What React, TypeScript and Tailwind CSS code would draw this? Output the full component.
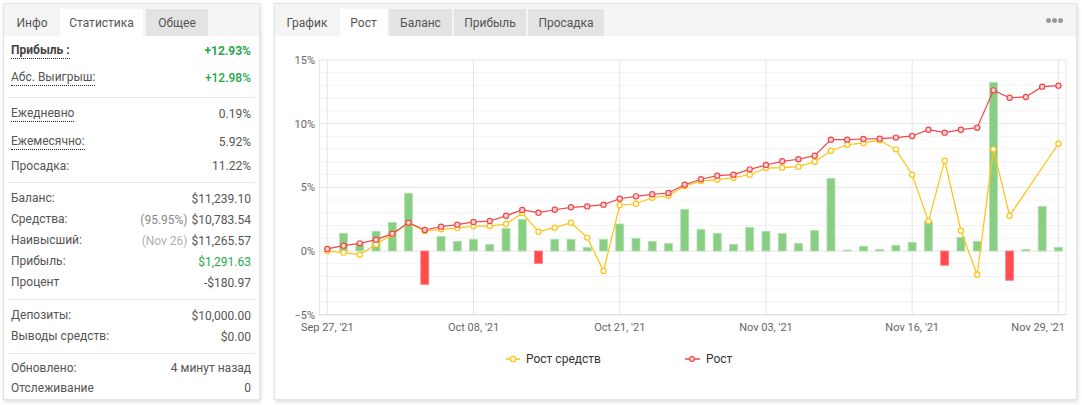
import React from "react";

type Row = {
  label: string;
  value: string;
  note?: string;
  noteColor?: string;
  dotted?: boolean;
  bold?: boolean;
  green?: boolean;
  medium?: boolean;
  h: string;
};

// группы строк статистики
const GROUPS: Row[][] = [
  [
    { label: "Прибыль :", value: "+12.93%", dotted: true, bold: true, green: true, h: "h-[27px]" },
    { label: "Абс. Выигрыш:", value: "+12.98%", dotted: true, green: true, medium: true, h: "h-[27px]" },
  ],
  [
    { label: "Ежедневно", value: "0.19%", dotted: true, h: "h-[28px]" },
    { label: "Ежемесячно:", value: "5.92%", dotted: true, h: "h-[28px]" },
    { label: "Просадка:", value: "11.22%", h: "h-[20px]" },
  ],
  [
    { label: "Баланс:", value: "$11,239.10", h: "h-[21px]" },
    { label: "Средства:", value: "$10,783.54", note: "(95.95%)", noteColor: "text-[#888]", h: "h-[21px]" },
    { label: "Наивысший:", value: "$11,265.57", note: "(Nov 26)", noteColor: "text-[#b0b0b0]", h: "h-[21px]" },
    { label: "Прибыль:", value: "$1,291.63", green: true, h: "h-[21px]" },
    { label: "Процент", value: "-$180.97", h: "h-[21px]" },
  ],
  [
    { label: "Депозиты:", value: "$10,000.00", h: "h-[21px]" },
    { label: "Выводы средств:", value: "$0.00", h: "h-[21px]" },
  ],
  [
    { label: "Обновлено:", value: "4 минут назад", h: "h-[20px]" },
    { label: "Отслеживание", value: "0", h: "h-[20px]" },
  ],
];

const GROUP_MARGINS = [
  "mt-[1px] mb-[6px]",
  "mt-[2px] mb-[6px]",
  "mt-[5px] mb-[6px]",
  "mt-[5px] mb-[6px]",
  "mt-[4px]",
];

const RED = [
  0.16, 0.42, 0.6, 0.89, 1.36, 2.22, 1.65, 1.91, 2.07, 2.28, 2.35, 2.77, 3.22, 3.01, 3.24, 3.43,
  3.5, 3.64, 4.1, 4.29, 4.45, 4.55, 5.2, 5.63, 5.91, 5.99, 6.41, 6.75, 7.04, 7.2, 7.48, 8.74,
  8.74, 8.79, 8.82, 8.9, 9.03, 9.52, 9.29, 9.52, 9.68, 12.61, 12.03, 12.09, 12.9, 12.98,
];

const YELLOW: (number | null)[] = [
  0, -0.13, -0.29, 0.52, 1.31, 2.2, 1.57, 1.7, 1.8, 1.96, 1.96, 2.12, 2.98, 1.52, 1.83, 2.22,
  1.05, -1.57, 3.59, 3.71, 4.18, 4.34, 5.1, 5.49, 5.6, 5.75, 5.99, 6.51, 6.54, 6.62, 7.01, 7.87,
  8.34, 8.48, 8.69, 7.98, 5.99, 2.33, 7.09, 1.59, -1.86, 7.98, 2.77, null, null, 8.42,
];

const BARS = [
  0, 1.39, 0.52, 1.55, 2.25, 4.53, -2.62, 1.15, 0.76, 0.92, 0.52, 1.78, 2.49, -0.97, 0.92, 0.92,
  0.29, 0.92, 2.12, 1.0, 0.76, 0.6, 3.27, 1.7, 1.39, 0.52, 1.86, 1.55, 1.39, 0.6, 1.62, 5.7,
  0.08, 0.37, 0.13, 0.45, 0.68, 2.33, -1.12, 1.07, 0.76, 13.24, -2.3, 0.13, 3.5, 0.29,
];

const X_LABELS = ["Sep 27, '21", "Oct 08, '21", "Oct 21, '21", "Nov 03, '21", "Nov 16, '21", "Nov 29, '21"];

const px = (i: number) => 328.3 + i * 16.247;
const py = (v: number) => 251 - v * 12.74;

function StatRow({ row }: { row: Row }) {
  const valueColor = row.green ? "text-[#25a84b]" : "text-[#555]";
  return (
    <div className={`flex items-center justify-between pl-[3px] pr-[4px] ${row.h}`}>
      <span
        className={`leading-[15px] ${row.bold ? "font-bold text-[#444]" : "text-[#555]"} ${
          row.dotted ? "border-b border-dotted border-[#222]" : ""
        }`}
      >
        {row.label}
      </span>
      <span className={`${valueColor} ${row.bold ? "font-bold" : row.medium ? "font-medium" : ""}`}>
        {row.note && <span className={`${row.noteColor} mr-[4px]`}>{row.note}</span>}
        {row.value}
      </span>
    </div>
  );
}

function StatsCard() {
  return (
    <div className="flex h-[397px] w-[257px] flex-col border border-[#e3e3e3] bg-white shadow-[1px_2px_4px_rgba(0,0,0,0.14)]">
      <div className="flex h-[32px] items-end bg-[#f5f5f5] pl-[1px]">
        <div className="flex h-[27px] w-[54px] items-center justify-center text-[#555]">Инфо</div>
        <div className="ml-[1px] flex h-[27px] w-[83px] items-center justify-center bg-white text-[#555]">
          Статистика
        </div>
        <div className="ml-[3px] flex h-[27px] w-[62px] items-center justify-center bg-[#e3e3e3] text-[#555]">
          Общее
        </div>
      </div>
      <div className="px-[4px]">
        {GROUPS.map((group, gi) => (
          <div key={gi} className={gi > 0 ? "border-t border-[#e8e8e8]" : ""}>
            <div className={GROUP_MARGINS[gi]}>
              {group.map((row) => (
                <StatRow key={row.label} row={row} />
              ))}
            </div>
          </div>
        ))}
      </div>
    </div>
  );
}

function GrowthChart() {
  const minor: number[] = [];
  for (let v = -4; v <= 14; v++) if (v % 5 !== 0) minor.push(v);

  const redPts = RED.map((v, i) => `${px(i)},${py(v)}`).join(" ");
  const yellowIdx = YELLOW.map((v, i) => (v === null ? -1 : i)).filter((i) => i >= 0);
  const yellowPts = yellowIdx.map((i) => `${px(i)},${py(YELLOW[i] as number)}`).join(" ");

  return (
    <svg width={801} height={362} viewBox="276 36 801 362" className="block">
      {/* сетка */}
      {minor.map((v) => (
        <line key={v} x1={320} x2={1067} y1={py(v)} y2={py(v)} stroke="#f3f3f3" strokeWidth={1} />
      ))}
      {[15, 10, 5, 0].map((v) => (
        <line key={v} x1={320} x2={1067} y1={py(v)} y2={py(v)} stroke="#e6e6e6" strokeWidth={1} />
      ))}
      {X_LABELS.map((_, k) => (
        <line key={k} x1={px(k * 9)} x2={px(k * 9)} y1={60} y2={314.7} stroke="#e6e6e6" strokeWidth={1} />
      ))}
      <line x1={320.5} x2={320.5} y1={60} y2={314.7} stroke="#e6e6e6" />
      <line x1={1067} x2={1067} y1={60} y2={314.7} stroke="#e6e6e6" />
      <line x1={320} x2={1067.5} y1={314.7} y2={314.7} stroke="#ccd6eb" />

      {/* подписи осей */}
      {[15, 10, 5, 0, -5].map((v) => (
        <text
          key={v}
          x={316}
          y={py(v) + 4}
          textAnchor="end"
          fontSize={11}
          fill="#666"
          fontFamily="Roboto, sans-serif"
        >
          {v < 0 ? `−${-v}%` : `${v}%`}
        </text>
      ))}
      {X_LABELS.map((t, k) => (
        <text
          key={t}
          x={k === 5 ? 1066 : px(k * 9)}
          y={331}
          textAnchor={k === 5 ? "end" : "middle"}
          fontSize={11}
          fill="#666"
          fontFamily="Roboto, sans-serif"
        >
          {t}
        </text>
      ))}

      {/* столбцы */}
      {BARS.map((v, i) =>
        v === 0 ? null : (
          <rect
            key={i}
            x={px(i) - 4}
            y={v > 0 ? py(v) : py(0)}
            width={8}
            height={Math.abs(v) * 12.74}
            fill={v > 0 ? "#88cf84" : "#ff4d4f"}
            stroke={v > 0 ? "#b4e0b1" : "#ff8080"}
            strokeWidth={0.8}
          />
        )
      )}

      {/* линии */}
      <polyline points={yellowPts} fill="none" stroke="#ffc20e" strokeWidth={1.2} />
      {yellowIdx.map((i) => (
        <circle key={i} cx={px(i)} cy={py(YELLOW[i] as number)} r={2.6} fill="#fff" stroke="#ffc20e" strokeWidth={1.2} />
      ))}
      <polyline points={redPts} fill="none" stroke="#f0474a" strokeWidth={1.2} />
      {RED.map((v, i) => (
        <circle key={i} cx={px(i)} cy={py(v)} r={2.6} fill="#ffd6d6" stroke="#f0474a" strokeWidth={1.2} />
      ))}

      {/* легенда */}
      <line x1={507} x2={521} y1={359} y2={359} stroke="#ffc20e" strokeWidth={1.5} />
      <circle cx={514} cy={359} r={2.6} fill="#fff" stroke="#ffc20e" strokeWidth={1.2} />
      <text x={527} y={363} fontSize={12} fill="#333" fontFamily="Roboto, sans-serif">
        Рост средств
      </text>
      <line x1={686} x2={701} y1={359} y2={359} stroke="#f0474a" strokeWidth={1.5} />
      <circle cx={693} cy={359} r={2.4} fill="#ffd6d6" stroke="#f0474a" strokeWidth={1.2} />
      <text x={707} y={363} fontSize={12} fill="#333" fontFamily="Roboto, sans-serif">
        Рост
      </text>
    </svg>
  );
}

function ChartCard() {
  const tabs = [
    { t: "Рост", w: "w-[47px]", cls: "bg-white ml-[1px]" },
    { t: "Баланс", w: "w-[63px]", cls: "bg-[#e3e3e3] ml-[2px]" },
    { t: "Прибыль", w: "w-[72px]", cls: "bg-[#e3e3e3] ml-[2px]" },
    { t: "Просадка", w: "w-[76px]", cls: "bg-[#e3e3e3] ml-[2px]" },
  ];
  return (
    <div className="flex h-[397px] w-[803px] flex-col border border-[#e3e3e3] bg-white shadow-[1px_2px_4px_rgba(0,0,0,0.14)]">
      <div className="flex h-[32px] items-end bg-[#f5f5f5]">
        <div className="flex h-[27px] w-[64px] items-center justify-center text-[#555]">График</div>
        {tabs.map((tab) => (
          <div key={tab.t} className={`flex h-[27px] items-center justify-center text-[#555] ${tab.w} ${tab.cls}`}>
            {tab.t}
          </div>
        ))}
        <div className="mb-[13px] ml-auto mr-[13px] flex gap-[1px]">
          <span className="h-[5px] w-[5px] rounded-full bg-[#9a9a9a]" />
          <span className="h-[5px] w-[5px] rounded-full bg-[#9a9a9a]" />
          <span className="h-[5px] w-[5px] rounded-full bg-[#9a9a9a]" />
        </div>
      </div>
      <GrowthChart />
    </div>
  );
}

export default function App() {
  return (
    <div className="flex h-[405px] w-[1082px] gap-[14px] bg-white pl-[3px] pt-[3px] font-['Roboto',sans-serif] text-[12px]">
      <StatsCard />
      <ChartCard />
    </div>
  );
}
